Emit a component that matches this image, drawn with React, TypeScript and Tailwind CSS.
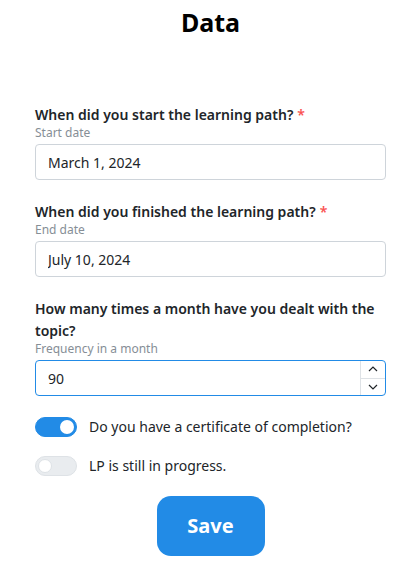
import { useState } from "react";

function Switch({ checked, onChange, label }: { checked: boolean; onChange: () => void; label: string }) {
  return (
    <label className="flex items-center gap-3 cursor-pointer">
      <button
        type="button"
        onClick={onChange}
        className={`relative w-[42px] h-[20px] rounded-full border transition-colors ${
          checked ? "bg-[#228be6] border-[#228be6]" : "bg-[#e9ecef] border-[#dee2e6]"
        }`}
      >
        <span
          className={`absolute top-[2px] w-[14px] h-[14px] rounded-full bg-white transition-all ${
            checked ? "left-[24px]" : "left-[2px] border border-[#dee2e6]"
          }`}
        />
      </button>
      <span className="text-[14px] leading-[20px] text-[#212529]">{label}</span>
    </label>
  );
}

function Field({
  label,
  description,
  required,
  children,
}: {
  label: string;
  description: string;
  required?: boolean;
  children: React.ReactNode;
}) {
  return (
    <div className="flex flex-col">
      <div className="text-[14px] leading-[22px] font-semibold text-[#212529]">
        {label}
        {required && <span className="text-[#fa5252] ml-1">*</span>}
      </div>
      <div className="text-[12px] leading-[14px] text-[#868e96]">{description}</div>
      <div className="mt-[4px]">{children}</div>
    </div>
  );
}

export default function App() {
  const [certificate, setCertificate] = useState(true);
  const [inProgress, setInProgress] = useState(false);
  const [freq, setFreq] = useState(90);

  const inputClass =
    "w-full h-[36px] border border-[#ced4da] rounded-[4px] px-[12px] text-[14px] text-[#212529] bg-white focus:outline-none";

  return (
    <div className="min-h-screen bg-white pl-[35px] pr-[29px] font-['Noto_Sans','Open_Sans',sans-serif]">
      <h1 className="text-center font-bold text-[25px] leading-[36px] pt-[4px] text-black">Data</h1>

      <div className="flex flex-col gap-[21px] mt-[64px]">
        <Field label="When did you start the learning path?" description="Start date" required>
          <input className={inputClass} defaultValue="March 1, 2024" />
        </Field>

        <Field label="When did you finished the learning path?" description="End date" required>
          <input className={inputClass} defaultValue="July 10, 2024" />
        </Field>

        <Field label="How many times a month have you dealt with the topic?" description="Frequency in a month">
          <div className="flex h-[36px] border border-[#228be6] rounded-[4px] bg-white overflow-hidden">
            <input
              className="flex-1 px-[12px] text-[14px] text-[#212529] focus:outline-none min-w-0"
              value={freq}
              onChange={(e) => setFreq(Number(e.target.value) || 0)}
            />
            <div className="w-[25px] flex flex-col border-l border-[#dee2e6]">
              <button
                type="button"
                onClick={() => setFreq(freq + 1)}
                className="flex-1 flex items-center justify-center border-b border-[#dee2e6] text-[#212529]"
              >
                <svg width="10" height="6" viewBox="0 0 10 6" fill="none">
                  <path d="M1 5L5 1L9 5" stroke="currentColor" strokeWidth="1.2" />
                </svg>
              </button>
              <button
                type="button"
                onClick={() => setFreq(Math.max(0, freq - 1))}
                className="flex-1 flex items-center justify-center text-[#212529]"
              >
                <svg width="10" height="6" viewBox="0 0 10 6" fill="none">
                  <path d="M1 1L5 5L9 1" stroke="currentColor" strokeWidth="1.2" />
                </svg>
              </button>
            </div>
          </div>
        </Field>
      </div>

      <div className="flex flex-col gap-[19px] mt-[21px]">
        <Switch checked={certificate} onChange={() => setCertificate(!certificate)} label="Do you have a certificate of completion?" />
        <Switch checked={inProgress} onChange={() => setInProgress(!inProgress)} label="LP is still in progress." />
      </div>

      <div className="flex justify-center mt-[20px]">
        <button
          type="button"
          className="w-[108px] h-[60px] rounded-[14px] bg-[#228be6] text-white font-bold text-[20px]"
        >
          Save
        </button>
      </div>
    </div>
  );
}
